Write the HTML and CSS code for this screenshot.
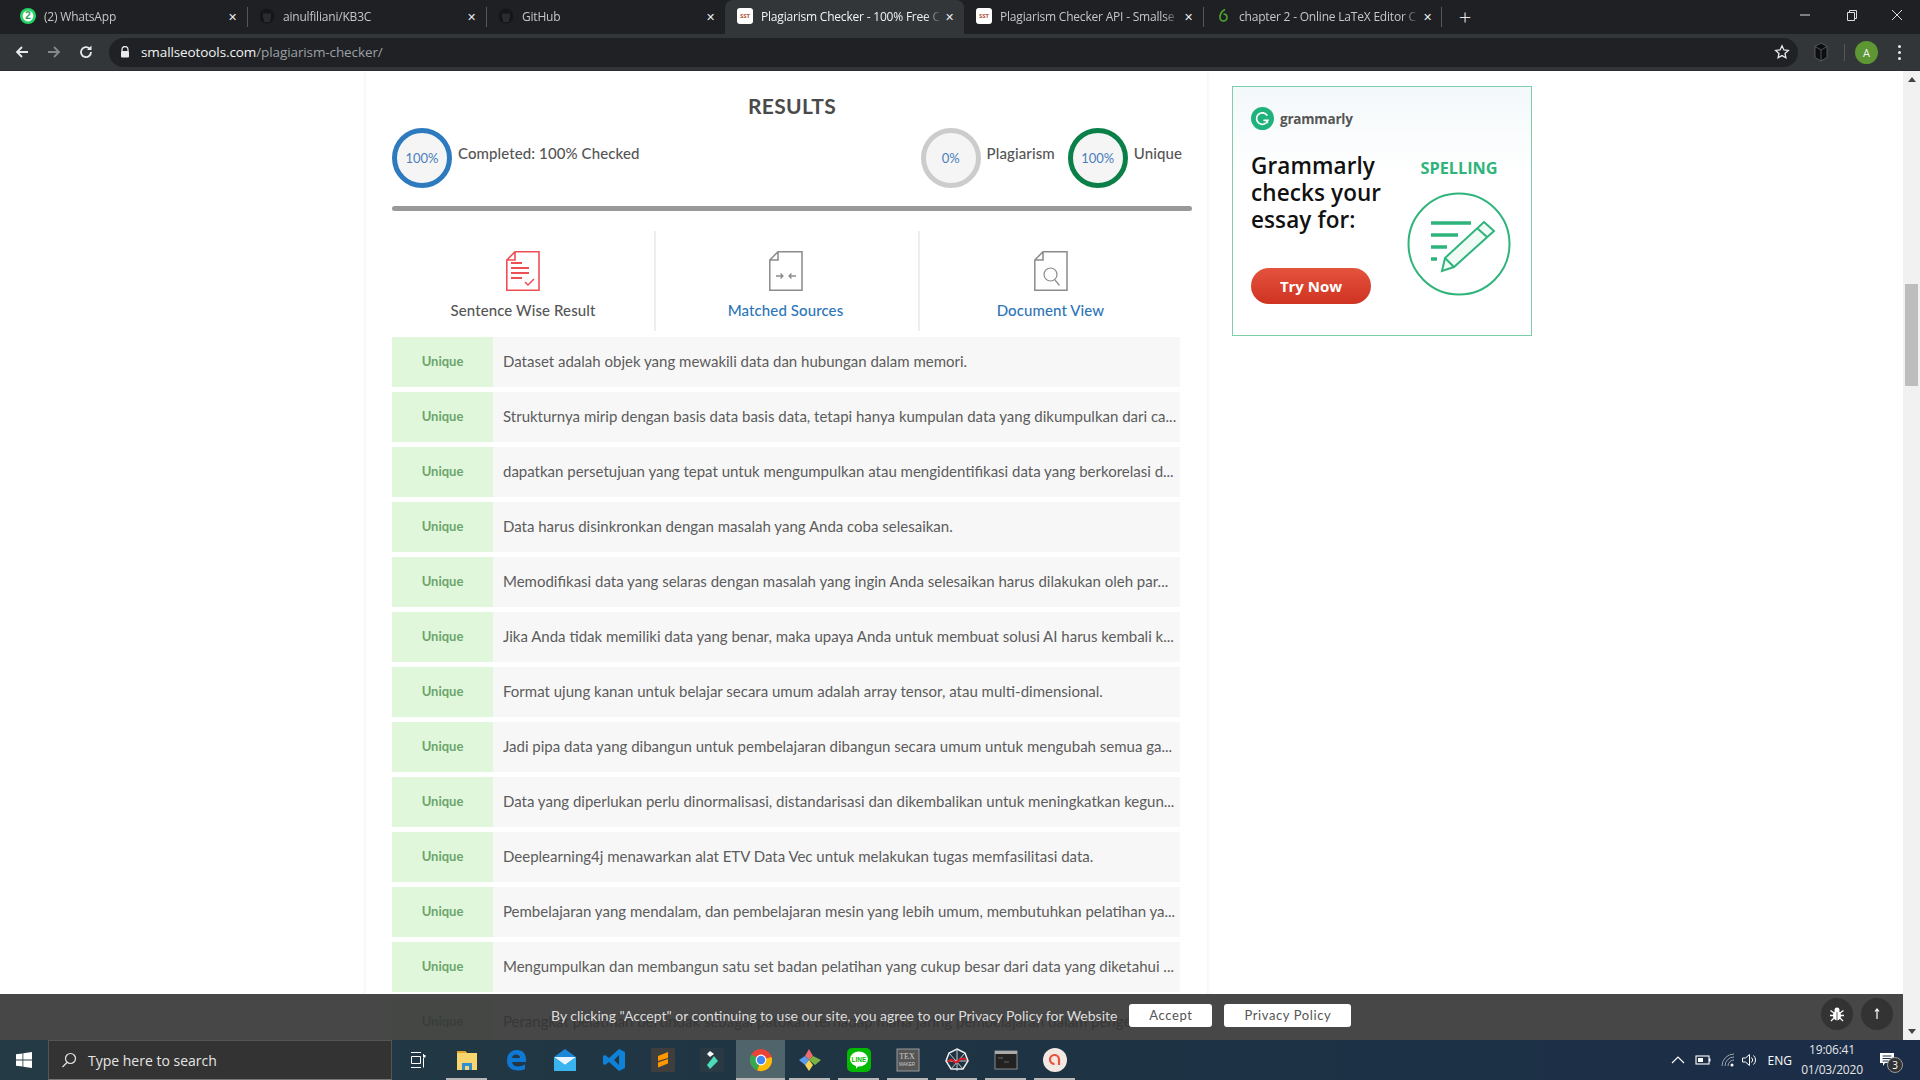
FILE: index.html
```html
<!DOCTYPE html>
<html lang="en">
<head>
  <meta charset="UTF-8" />
  <title>Plagiarism Checker - 100% Free Online Plagiarism Detector</title>
  <link rel="stylesheet" href="styles.css">
</head>
<body>

  <!-- browser chrome -->
  <div class="tabstrip">
    <div class="tab">
      <svg class="favicon" viewBox="0 0 16 16"><circle cx="8" cy="8" r="8" fill="#25d366"/><circle cx="8" cy="8" r="5.4" fill="#fff"/><text x="8" y="11.4" font-size="10" font-weight="700" text-anchor="middle" fill="#25a050" font-family="Liberation Sans">2</text></svg>
      <span class="tab-title">(2) WhatsApp</span><span class="tab-x">✕</span>
    </div>
    <div class="tab sep">
      <svg class="favicon" viewBox="0 0 16 16"><circle cx="8" cy="8" r="7.5" fill="#14161a"/><path d="M5 14v-3C4 10 3.6 8.6 4.2 7.4L4 5l2 .8c1.300-.4 2.700-.4 4 0L12 5l-.2 2.400c.6 1.200.2 2.600-.8 3.600v3z" fill="#2a2c30"/></svg>
      <span class="tab-title">ainulfiliani/KB3C</span><span class="tab-x">✕</span>
    </div>
    <div class="tab sep">
      <svg class="favicon" viewBox="0 0 16 16"><circle cx="8" cy="8" r="7.5" fill="#14161a"/><path d="M5 14v-3C4 10 3.6 8.6 4.2 7.4L4 5l2 .8c1.300-.4 2.700-.4 4 0L12 5l-.2 2.400c.6 1.200.2 2.600-.8 3.600v3z" fill="#2a2c30"/></svg>
      <span class="tab-title">GitHub</span><span class="tab-x">✕</span>
    </div>
    <div class="tab active">
      <span class="sst">SST</span>
      <span class="tab-title">Plagiarism Checker - 100% Free C</span><span class="tab-x">✕</span>
    </div>
    <div class="tab">
      <span class="sst">SST</span>
      <span class="tab-title">Plagiarism Checker API - Smallse</span><span class="tab-x">✕</span>
    </div>
    <div class="tab sep rsep">
      <svg class="favicon" viewBox="0 0 16 16"><path d="M10 1.500C7 3 5 5.500 5 9.500a3.500 3.500 0 0 0 7 0c0-2-1.500-3.500-3.500-3.500" fill="none" stroke="#4fa82f" stroke-width="1.600"/></svg>
      <span class="tab-title">chapter 2 - Online LaTeX Editor C</span><span class="tab-x">✕</span>
    </div>
    <span class="newtab">+</span>
    <div class="winbtns">
      <svg viewBox="0 0 46 30"><path d="M18 15h10" stroke="#ddd"/></svg>
      <svg viewBox="0 0 46 30"><path d="M19.500 12.500h7v8h-7zM21.500 12.500v-2h7v8h-2" fill="none" stroke="#ddd"/></svg>
      <svg viewBox="0 0 46 30"><path d="M18 10l10 10M28 10L18 20" stroke="#ddd"/></svg>
    </div>
  </div>

  <div class="toolbar">
    <svg class="navicon" viewBox="0 0 16 16"><path d="M14 8H3M8 3L3 8l5 5" fill="none" stroke="#e8eaed" stroke-width="1.800"/></svg>
    <svg class="navicon" viewBox="0 0 16 16"><path d="M2 8h11M8 3l5 5-5 5" fill="none" stroke="#85888c" stroke-width="1.800"/></svg>
    <svg class="navicon" viewBox="0 0 16 16"><path d="M13 8a5 5 0 1 1-1.500-3.500" fill="none" stroke="#e8eaed" stroke-width="1.800"/><path d="M13.500 1.500v4.500H9z" fill="#e8eaed"/></svg>
    <div class="omnibox">
      <svg class="lock" viewBox="0 0 10 12"><path d="M2 5V3.500a3 3 0 0 1 6 0V5" fill="none" stroke="#e8eaed" stroke-width="1.300"/><rect x="1" y="5" width="8" height="6.500" rx="1" fill="#e8eaed"/></svg>
      <span class="url">smallseotools.com<span class="url-path">/plagiarism-checker/</span></span>
      <svg class="star" viewBox="0 0 16 16"><path d="M8 1.800l1.900 4.100 4.400.5-3.300 3 .9 4.400L8 11.600l-3.900 2.200.9-4.400-3.300-3 4.400-.5z" fill="none" stroke="#e8eaed" stroke-width="1.300"/></svg>
    </div>
    <svg class="ext" viewBox="0 0 16 20"><path d="M8 1l6 3.500v11L8 19l-6-3.500v-11z" fill="#0d0e10" stroke="#6a6d70" stroke-width=".7"/><path d="M8 8v11M2 4.500L8 8l6-3.500" fill="none" stroke="#6a6d70" stroke-width=".7"/></svg>
    <span class="toolbar-sep"></span>
    <span class="avatar">A</span>
    <span class="kebab"><i></i><i></i><i></i></span>
  </div>

  <!-- page viewport -->
  <div class="viewport">
    <div class="page">
      <div class="main-card">
        <h2 class="results-title">RESULTS</h2>

        <div class="stats">
          <div class="stat">
            <span class="ring ring-blue">100%</span>
            <span class="stat-label">Completed: 100% Checked</span>
          </div>
          <div class="stat-right">
            <div class="stat">
              <span class="ring ring-grey">0%</span>
              <span class="stat-label">Plagiarism</span>
            </div>
            <div class="stat">
              <span class="ring ring-green">100%</span>
              <span class="stat-label">Unique</span>
            </div>
          </div>
        </div>

        <div class="progress"></div>

        <div class="views">
          <div class="view">
            <svg class="doc" viewBox="0 0 34 40"><path d="M9 .8h24v38.400H.8V9zM9 .8V9H.8" fill="none" stroke="#ee4f55" stroke-width="1.600"/><path d="M5 12h11M5 17h18M5 22h18M5 27h11" stroke="#ee4f55" stroke-width="1.800"/><path d="M19 31l3 3 6-6" fill="none" stroke="#ee4f55" stroke-width="1.500"/></svg>
            <span class="view-label view-dark">Sentence Wise Result</span>
          </div>
          <div class="view view-mid">
            <svg class="doc" viewBox="0 0 34 40"><path d="M9 .8h24v38.400H.8V9zM9 .8V9H.8" fill="none" stroke="#8b8b8b" stroke-width="1.500"/><path d="M7 25h7M11.500 22.500L14 25l-2.500 2.500M27 25h-7M22.500 22.500L20 25l2.500 2.500" fill="none" stroke="#8b8b8b" stroke-width="1.300"/></svg>
            <span class="view-label">Matched Sources</span>
          </div>
          <div class="view">
            <svg class="doc" viewBox="0 0 34 40"><path d="M9 .8h24v38.400H.8V9zM9 .8V9H.8" fill="none" stroke="#8b8b8b" stroke-width="1.500"/><circle cx="16.500" cy="23.500" r="6.500" fill="none" stroke="#8b8b8b" stroke-width="1.200"/><path d="M21 29l4.500 5.500" stroke="#8b8b8b" stroke-width="1.200"/></svg>
            <span class="view-label">Document View</span>
          </div>
        </div>

        <div class="rows">
          <div class="row"><span class="badge">Unique</span><span class="sentence">Dataset adalah objek yang mewakili data dan hubungan dalam memori.</span></div>
          <div class="row"><span class="badge">Unique</span><span class="sentence">Strukturnya mirip dengan basis data basis data, tetapi hanya kumpulan data yang dikumpulkan dari ca...</span></div>
          <div class="row"><span class="badge">Unique</span><span class="sentence">dapatkan persetujuan yang tepat untuk mengumpulkan atau mengidentifikasi data yang berkorelasi d...</span></div>
          <div class="row"><span class="badge">Unique</span><span class="sentence">Data harus disinkronkan dengan masalah yang Anda coba selesaikan.</span></div>
          <div class="row"><span class="badge">Unique</span><span class="sentence">Memodifikasi data yang selaras dengan masalah yang ingin Anda selesaikan harus dilakukan oleh par...</span></div>
          <div class="row"><span class="badge">Unique</span><span class="sentence">Jika Anda tidak memiliki data yang benar, maka upaya Anda untuk membuat solusi AI harus kembali k...</span></div>
          <div class="row"><span class="badge">Unique</span><span class="sentence">Format ujung kanan untuk belajar secara umum adalah array tensor, atau multi-dimensional.</span></div>
          <div class="row"><span class="badge">Unique</span><span class="sentence">Jadi pipa data yang dibangun untuk pembelajaran dibangun secara umum untuk mengubah semua ga...</span></div>
          <div class="row"><span class="badge">Unique</span><span class="sentence">Data yang diperlukan perlu dinormalisasi, distandarisasi dan dikembalikan untuk meningkatkan kegun...</span></div>
          <div class="row"><span class="badge">Unique</span><span class="sentence">Deeplearning4j menawarkan alat ETV Data Vec untuk melakukan tugas memfasilitasi data.</span></div>
          <div class="row"><span class="badge">Unique</span><span class="sentence">Pembelajaran yang mendalam, dan pembelajaran mesin yang lebih umum, membutuhkan pelatihan ya...</span></div>
          <div class="row"><span class="badge">Unique</span><span class="sentence">Mengumpulkan dan membangun satu set badan pelatihan yang cukup besar dari data yang diketahui ...</span></div>
          <div class="row"><span class="badge">Unique</span><span class="sentence">Perangkat pelatihan bertindak sebagai patokan terhadap mana jaring pembelajaran dalam penge...</span></div>
        </div>
      </div>

      <aside class="ad">
        <div class="ad-brand">
          <svg class="ad-logo" viewBox="0 0 24 24"><circle cx="12" cy="12" r="12" fill="#20b27c"/><path d="M17 9a6 6 0 1 0 .5 5h-4.500M17 17v-3h-3" fill="none" stroke="#fff" stroke-width="1.800"/></svg>
          <span class="ad-name">grammarly</span>
        </div>
        <div class="ad-body">
          <div class="ad-left">
            <p class="ad-copy">Grammarly checks your essay for:</p>
            <span class="ad-btn">Try Now</span>
          </div>
          <div class="ad-right">
            <span class="ad-word">SPELLING</span>
            <svg class="ad-pic" viewBox="0 0 104 104"><circle cx="52" cy="52" r="50.500" fill="none" stroke="#2fb47c" stroke-width="2"/><path d="M24 31h40M24 43h27M24 55h16M24 67h6" stroke="#2fb47c" stroke-width="3.400"/><path d="M77 30l10 9-40 36-9-9zM70 36l10 9M38 66l-3 13 12-4" fill="#f0fbf6" stroke="#2fb47c" stroke-width="2"/></svg>
          </div>
        </div>
      </aside>

      <div class="scrollbar">
        <span class="arrow-up"></span>
        <span class="thumb"></span>
        <span class="arrow-down"></span>
      </div>
    </div>

    <div class="cookie">
      <span class="cookie-text">By clicking "Accept" or continuing to use our site, you agree to our Privacy Policy for Website</span>
      <span class="cookie-btn btn-accept">Accept</span>
      <span class="cookie-btn btn-policy">Privacy Policy</span>
      <span class="round-btn bug">
        <svg viewBox="0 0 16 16"><ellipse cx="8" cy="9.500" rx="4" ry="5" fill="#fff"/><circle cx="8" cy="4" r="2.500" fill="#fff"/><path d="M1.500 4.500L5 7M14.500 4.500L11 7M1 9.500h4M15 9.500h-4M2 15l3-3M14 15l-3-3" stroke="#fff" stroke-width="1.300"/><path d="M8 6v9" stroke="#333" stroke-width=".8"/></svg>
      </span>
      <span class="round-btn up">
        <svg viewBox="0 0 16 16"><path d="M8 13V3M6 5.500L8 3l2 2.500" fill="none" stroke="#fff" stroke-width="1.200"/></svg>
      </span>
    </div>
  </div>

  <!-- windows taskbar -->
  <div class="taskbar">
    <span class="start">
      <svg viewBox="0 0 16 16"><path d="M0 2.300l6.500-.9v6.200H0zM7.300 1.300L16 0v7.600H7.300zM0 8.400h6.500v6.200L0 13.700zM7.300 8.400H16V16l-8.700-1.200z" fill="#fff"/></svg>
    </span>
    <div class="search">
      <svg viewBox="0 0 16 16"><circle cx="9.500" cy="6.500" r="5" fill="none" stroke="#e6e6e6" stroke-width="1.200"/><path d="M6 10.500L1.500 15" stroke="#e6e6e6" stroke-width="1.200"/></svg>
      <span>Type here to search</span>
    </div>
    <div class="tasks">
      <span class="task task-view">
        <svg viewBox="0 0 16 16"><path d="M1 .5h10M1 15.500h10M1.500 4.500h9v7h-9zM13.500 2v1.500M13.500 6v9.500" fill="none" stroke="#fff" stroke-width="1"/><rect x="13" y="3" width="2.500" height="2.500" fill="#fff"/></svg>
      </span>
      <span class="task running">
        <svg viewBox="0 0 24 24"><path d="M2 3h8l2 2h10v17H2z" fill="#f9d56e"/><path d="M2 3h8l2 2H2z" fill="#e5a82d"/><path d="M7 22v-7h10v7h-3v-4h-4v4z" fill="#2e8fd6"/></svg>
      </span>
      <span class="task">
        <svg viewBox="0 0 24 24"><path d="M3 13C3 6 7 2 13 2c6 0 9 4 9 10v2H8c.5 3 3 4.500 6 4.500 2.500 0 5-.8 7-2v4.500c-2 1-4.500 1.500-7 1.500C7 22.500 3 19 3 13zm5-3h8c0-2-1.500-3.500-4-3.500S8.500 8 8 10z" fill="#0f78d4"/></svg>
      </span>
      <span class="task">
        <svg viewBox="0 0 24 24"><path d="M1 9L12 1l11 8v14H1z" fill="#1b87d6"/><path d="M1 9h22L12 17z" fill="#eaf6fd"/><path d="M1 9l11 8v6H1zM23 9L12 17v6h11z" fill="#39b4ee"/></svg>
      </span>
      <span class="task">
        <svg viewBox="0 0 24 24"><path d="M17 1l6 3v16l-6 3-10-9-4 3-2-1V8l2-1 4 3zM17 7l-5 5 5 5z" fill="#0f82d8"/></svg>
      </span>
      <span class="task">
        <svg viewBox="0 0 24 24"><rect width="24" height="24" fill="#3e3e3e" rx="1"/><path d="M17 4L7 8v5l10-3zM17 11L7 14.500v5l10-4z" fill="#ff9800"/></svg>
      </span>
      <span class="task">
        <svg viewBox="0 0 24 24"><rect width="24" height="24" fill="#2a3a44" rx="1"/><path d="M10 3l4 3-4 3-3-3z" fill="#fff"/><path d="M14 8l4 5-8 8-3-4z" fill="#4ddbb8"/></svg>
      </span>
      <span class="task active">
        <svg viewBox="0 0 24 24"><circle cx="12" cy="12" r="11" fill="#ea4335"/><path d="M12 12L22.500 9A11 11 0 0 1 8 22.300z" fill="#fbbc05"/><path d="M12 12L8 22.300A11 11 0 0 1 2.500 6.500z" fill="#34a853"/><circle cx="12" cy="12" r="5.400" fill="#fff"/><circle cx="12" cy="12" r="4.200" fill="#4285f4"/></svg>
      </span>
      <span class="task running">
        <svg viewBox="0 0 24 24"><path d="M11 1l4 7-4 4-4-4z" fill="#ed6c6c"/><path d="M7 8l4 4-4 5-6-5z" fill="#5b9bf0"/><path d="M15 8l8 4-6 5-6-5z" fill="#7cb342"/><path d="M7 17l4-5 4 5-4 6z" fill="#f5d45e"/></svg>
      </span>
      <span class="task running">
        <svg viewBox="0 0 24 24"><rect width="24" height="24" rx="5" fill="#00b900"/><ellipse cx="12" cy="11" rx="9" ry="7.500" fill="#fff"/><path d="M9 17l3 0-3 4z" fill="#fff"/><text x="12" y="13.500" font-size="6.500" font-weight="700" text-anchor="middle" fill="#00b900" font-family="Liberation Sans">LINE</text></svg>
      </span>
      <span class="task running">
        <svg viewBox="0 0 24 24"><rect x="1" y="1" width="22" height="22" fill="#555" stroke="#999"/><text x="11" y="11" font-size="8" text-anchor="middle" fill="#ccc" font-family="Liberation Serif">TEX</text><text x="11" y="18" font-size="4.500" text-anchor="middle" fill="#ccc" font-family="Liberation Sans">MAKER</text></svg>
      </span>
      <span class="task running">
        <svg viewBox="0 0 24 24"><path d="M12 1l8 4 3 8-5 8H6l-5-8 3-8z" fill="none" stroke="#eee" stroke-width="1.500"/><path d="M12 1v22M1 13h22M4 5l14 16M20 5L6 21" stroke="#ddd" stroke-width=".9"/><path d="M3 14c4-6 6 2 9 0s4-5 9-3" fill="none" stroke="#e01b24" stroke-width="2.200"/></svg>
      </span>
      <span class="task running">
        <svg viewBox="0 0 24 24"><rect x="1" y="3" width="22" height="18" fill="#222" stroke="#888"/><path d="M1 3h22v3H1z" fill="#aaa"/><path d="M4 10h5M10 14h5" stroke="#666"/></svg>
      </span>
      <span class="task running">
        <svg viewBox="0 0 24 24"><circle cx="12" cy="12" r="12" fill="#f3e9e4"/><path d="M16 17V11a4.500 4.500 0 1 0-4.500 5" fill="none" stroke="#e8533a" stroke-width="2.200"/></svg>
      </span>
    </div>
    <div class="tray">
      <svg class="tray-ico" viewBox="0 0 16 16"><path d="M2 11l6-6 6 6" fill="none" stroke="#fff" stroke-width="1.200"/></svg>
      <svg class="tray-ico" viewBox="0 0 16 16"><rect x="1" y="4" width="13" height="8" fill="none" stroke="#fff" stroke-width="1.100"/><rect x="3" y="6" width="5" height="4" fill="#fff"/><rect x="14" y="6.500" width="1.500" height="3" fill="#fff"/></svg>
      <svg class="tray-ico tray-wifi" viewBox="0 0 16 16"><path d="M2 14a12 12 0 0 1 12-12M5 14a9 9 0 0 1 9-9M8 14a6 6 0 0 1 6-6" fill="none" stroke="#9aa4ab" stroke-width="1"/><circle cx="12" cy="13" r="1.500" fill="#fff"/></svg>
      <svg class="tray-ico" viewBox="0 0 16 16"><path d="M1.500 6h3l4-3.500v11l-4-3.500h-3zM10.500 5.500a3.500 3.500 0 0 1 0 5M12.500 3.500a6 6 0 0 1 0 9" fill="none" stroke="#fff" stroke-width="1"/></svg>
      <span class="lang">ENG</span>
      <span class="clock"><span>19:06:41</span><span>01/03/2020</span></span>
      <span class="notif">
        <svg viewBox="0 0 16 16"><path d="M1 1h14v10H6l-2 3v-3H1z" fill="#fff"/><path d="M3.500 4h9M3.500 6.500h9M3.500 9h6" stroke="#1b2c48"/></svg>
        <span class="notif-count">3</span>
      </span>
    </div>
  </div>

</body>
</html>
```

FILE: styles.css
```css
* {
  box-sizing: border-box;
}

html, body {
  margin: 0;
  height: 100%;
}

body {
  display: flex;
  flex-direction: column;
  height: 1080px;
  overflow: hidden;
  font-family: "Lato", "Open Sans", sans-serif;
  background-color: #fff;
}

/* tab strip */
.tabstrip {
  display: flex;
  align-items: flex-end;
  height: 34px;
  padding-left: 8px;
  background-color: #1f2023;
  color: #c4c6c9;
  font-family: "Open Sans", sans-serif;
  font-size: 12px;
}

.tab {
  position: relative;
  display: flex;
  align-items: center;
  width: 239px;
  height: 34px;
  padding: 0 7px 2px 12px;
  flex-shrink: 0;
}

.tab.sep::before {
  content: "";
  position: absolute;
  left: 0;
  top: 7px;
  height: 20px;
  width: 1px;
  background-color: #55575a;
}

.tab.rsep::after {
  content: "";
  position: absolute;
  right: 0;
  top: 7px;
  height: 20px;
  width: 1px;
  background-color: #55575a;
}

.tab.active {
  background-color: #323639;
  color: #f1f3f4;
  border-radius: 8px 8px 0 0;
}

.favicon {
  width: 16px;
  height: 16px;
  flex-shrink: 0;
}

.sst {
  display: flex;
  align-items: center;
  justify-content: center;
  width: 16px;
  height: 16px;
  flex-shrink: 0;
  background-color: #fff;
  border-radius: 3px;
  color: #b0553d;
  font-size: 6px;
  font-weight: 700;
}

.tab-title {
  flex: 1;
  margin-left: 8px;
  white-space: nowrap;
  overflow: hidden;
  letter-spacing: -0.2px;
  -webkit-mask-image: linear-gradient(to left, transparent, #000 16px);
  mask-image: linear-gradient(to left, transparent, #000 16px);
}

.tab-x {
  width: 16px;
  font-size: 11px;
  text-align: center;
  color: #e8eaed;
}

.newtab {
  margin-left: 10px;
  width: 26px;
  height: 34px;
  line-height: 32px;
  text-align: center;
  font-size: 22px;
  font-weight: 300;
  color: #e8eaed;
}

.winbtns {
  display: flex;
  margin-left: auto;
  align-self: flex-start;
}

.winbtns svg {
  width: 46px;
  height: 30px;
}

/* toolbar */
.toolbar {
  display: flex;
  align-items: center;
  height: 37px;
  padding-left: 14px;
  background-color: #323639;
  border-bottom: 1px solid #2a2c2f;
}

.navicon {
  width: 16px;
  height: 16px;
  margin-right: 16px;
}

.omnibox {
  display: flex;
  align-items: center;
  width: 1689px;
  height: 29px;
  margin-left: -1px;
  padding: 0 8px 0 11px;
  background-color: #202124;
  border-radius: 15px;
}

.lock {
  width: 10px;
  height: 12px;
}

.url {
  margin-left: 11px;
  color: #f1f3f4;
  font-family: "Open Sans", sans-serif;
  font-size: 13.500px;
  letter-spacing: -0.1px;
}

.url-path {
  color: #9aa0a6;
}

.star {
  width: 16px;
  height: 16px;
  margin-left: auto;
}

.ext {
  width: 16px;
  height: 20px;
  margin-left: 15px;
}

.toolbar-sep {
  width: 1px;
  height: 17px;
  margin-left: 15px;
  background-color: #55575a;
}

.avatar {
  display: flex;
  align-items: center;
  justify-content: center;
  width: 23px;
  height: 23px;
  margin-left: 10px;
  background-color: #5d9632;
  border-radius: 50%;
  color: #f1f3f4;
  font-family: "Open Sans", sans-serif;
  font-size: 11px;
}

.kebab {
  display: flex;
  flex-direction: column;
  gap: 3px;
  margin-left: 20px;
}

.kebab i {
  width: 3px;
  height: 3px;
  background-color: #e8eaed;
  border-radius: 50%;
}

/* page */
.viewport {
  position: relative;
  flex: 1;
  overflow: hidden;
}

.page {
  display: flex;
  height: 100%;
  padding-left: 366px;
}

.main-card {
  width: 841px;
  height: 1100px;
  padding: 19px 15px 0 26px;
  box-shadow: 0 0 5px rgba(0,0,0,0.08);
  color: #555;
}

.results-title {
  margin: 0;
  text-align: center;
  font-size: 21px;
  line-height: 32px;
  font-weight: 700;
  letter-spacing: 0.3px;
  color: #4a4a4a;
}

.stats {
  display: flex;
  justify-content: space-between;
  width: 790px;
  margin-top: 6px;
}

.stat {
  display: flex;
  align-items: flex-start;
}

.stat-right {
  display: flex;
  gap: 13px;
}

.ring {
  display: flex;
  align-items: center;
  justify-content: center;
  width: 60px;
  height: 60px;
  border-radius: 50%;
  border: 5px solid #ccc;
  background-color: #f5f5f5;
  color: #4a7ebb;
  font-size: 13px;
}

.ring-blue {
  border-color: #2d7abf;
}

.ring-grey {
  border-color: #ccc;
}

.ring-green {
  border-color: #0a8048;
}

.stat-label {
  margin: 15px 0 0 6px;
  font-size: 15px;
  line-height: 20px;
  color: #555;
  font-weight: 500;
  letter-spacing: 0.1px;
}

.progress {
  height: 5px;
  margin-top: 18px;
  background-color: #999;
  border-radius: 3px;
}

.views {
  display: flex;
  height: 100px;
  margin-top: 20px;
}

.view {
  display: flex;
  flex-direction: column;
  align-items: center;
  width: 263px;
  padding-top: 20px;
  border-left: 2px solid #eee;
  font-size: 15px;
  letter-spacing: 0.1px;
}

.view:first-child {
  width: 262px;
  border-left: none;
}

.view-mid {
  width: 264px;
  padding-right: 3px;
}

.doc {
  width: 34px;
  height: 40px;
}

.view-label {
  margin-top: 10px;
  color: #2b75b8;
  font-weight: 500;
}

.view-dark {
  color: #555;
}

.rows {
  display: flex;
  flex-direction: column;
  gap: 5px;
  width: 788px;
  margin-top: 6px;
}

.row {
  display: flex;
  align-items: center;
  height: 50px;
  flex-shrink: 0;
  background-color: #f7f7f7;
}

.badge {
  display: flex;
  align-items: center;
  justify-content: center;
  width: 101px;
  height: 100%;
  padding-bottom: 2px;
  background-color: #e1f7dc;
  color: #6ba56b;
  font-size: 13px;
  font-weight: 700;
}

.sentence {
  margin-left: 10px;
  padding-bottom: 2px;
  white-space: nowrap;
  font-size: 15px;
  color: #5c5c5c;
}

/* ad */
.ad {
  width: 300px;
  height: 250px;
  margin: 15px 0 0 25px;
  padding: 20px 0 0 18px;
  border: 1px solid #7dcfa9;
  background: linear-gradient(#f3f8fa, #fff 35%);
  font-family: "Open Sans", sans-serif;
}

.ad-brand {
  display: flex;
  align-items: center;
}

.ad-logo {
  width: 23px;
  height: 23px;
}

.ad-name {
  margin-left: 6px;
  font-size: 13.500px;
  font-weight: 700;
  color: #555;
  letter-spacing: -0.2px;
}

.ad-body {
  display: flex;
  margin-top: 22px;
}

.ad-left {
  width: 156px;
}

.ad-copy {
  margin: 0;
  width: 150px;
  font-size: 22.500px;
  line-height: 27px;
  font-weight: 600;
  color: #111;
  letter-spacing: 0.1px;
}

.ad-btn {
  display: flex;
  align-items: center;
  justify-content: center;
  width: 120px;
  height: 36px;
  margin-top: 35px;
  border-radius: 18px;
  background: linear-gradient(#e4533e, #cf3321);
  color: #fff;
  font-size: 15px;
  font-weight: 700;
}

.ad-right {
  display: flex;
  flex-direction: column;
  align-items: center;
  width: 104px;
}

.ad-word {
  margin-top: 5px;
  font-size: 16.300px;
  font-weight: 700;
  color: #2fb47c;
}

.ad-pic {
  width: 104px;
  height: 104px;
  margin-top: 13px;
}

/* scrollbar */
.scrollbar {
  position: absolute;
  top: 0;
  right: 0;
  bottom: 0;
  width: 17px;
  background-color: #f1f1f1;
}

.arrow-up {
  position: absolute;
  top: 6px;
  left: 5px;
  border: 4px solid transparent;
  border-top: none;
  border-bottom: 5px solid #444;
}

.thumb {
  position: absolute;
  top: 213px;
  left: 2px;
  width: 13px;
  height: 102px;
  background-color: #bdbdbd;
}

.arrow-down {
  position: absolute;
  bottom: 6px;
  left: 5px;
  border: 4px solid transparent;
  border-bottom: none;
  border-top: 5px solid #444;
}

/* cookie bar */
.cookie {
  position: absolute;
  left: 0;
  right: 17px;
  bottom: 0;
  display: flex;
  align-items: center;
  height: 46px;
  padding: 0 0 4px 551px;
  background-color: rgba(51,51,51,0.9);
  color: #ddd;
  font-size: 14px;
}

.cookie-text {
  white-space: nowrap;
}

.cookie-btn {
  display: flex;
  align-items: center;
  justify-content: center;
  height: 23px;
  background-color: #fff;
  border-radius: 3px;
  color: #555;
  font-size: 13px;
  letter-spacing: 0.6px;
}

.btn-accept {
  width: 83px;
  margin-left: 12px;
}

.btn-policy {
  width: 127px;
  margin-left: 12px;
}

.round-btn {
  position: absolute;
  top: 4px;
  display: flex;
  align-items: center;
  justify-content: center;
  width: 32px;
  height: 32px;
  border-radius: 50%;
  background-color: #333;
}

.round-btn svg {
  width: 16px;
  height: 16px;
}

.bug {
  left: 1821px;
}

.up {
  left: 1861px;
}

/* taskbar */
.taskbar {
  display: flex;
  align-items: center;
  height: 40px;
  background: linear-gradient(to right, #243a44, #1d3344 60%, #1b2c48);
  color: #fff;
}

.start {
  display: flex;
  align-items: center;
  justify-content: center;
  width: 48px;
  height: 40px;
}

.start svg {
  width: 16px;
  height: 16px;
}

.search {
  display: flex;
  align-items: center;
  width: 344px;
  height: 40px;
  padding-left: 12px;
  background-color: #333;
  border: 1px solid #555;
  border-bottom-color: #777;
  font-family: "Open Sans", sans-serif;
  font-size: 14px;
  color: #e6e6e6;
}

.search svg {
  width: 16px;
  height: 16px;
  margin-right: 11px;
}

.tasks {
  display: flex;
  margin-left: 1px;
}

.task {
  position: relative;
  display: flex;
  align-items: center;
  justify-content: center;
  width: 49px;
  height: 40px;
}

.task svg {
  width: 24px;
  height: 24px;
}

.task-view svg {
  width: 16px;
  height: 16px;
}

.task.running::after,
.task.active::after {
  content: "";
  position: absolute;
  left: 4px;
  right: 4px;
  bottom: 0;
  height: 2px;
  background-color: #b8b8b8;
}

.task.active {
  background-color: #50646c;
}

.task.active::after {
  left: 0;
  right: 0;
}

.tray {
  display: flex;
  align-items: center;
  margin-left: auto;
  font-family: "Open Sans", sans-serif;
}

.tray-ico {
  width: 16px;
  height: 16px;
  margin-right: 9px;
}

.tray-wifi {
  margin-right: 5px;
}

.lang {
  margin-left: 2px;
  font-size: 12px;
}

.clock {
  display: flex;
  flex-direction: column;
  align-items: center;
  width: 70px;
  margin-left: 5px;
  font-size: 12px;
  line-height: 20px;
  color: #e6e6e6;
  letter-spacing: -0.2px;
}

.notif {
  position: relative;
  width: 16px;
  height: 16px;
  margin: 0 25px 0 12px;
}

.notif svg {
  display: block;
  width: 16px;
  height: 16px;
}

.notif-count {
  position: absolute;
  left: 8px;
  top: 5px;
  width: 16px;
  height: 16px;
  border: 1px solid #999;
  border-radius: 50%;
  background-color: #333;
  text-align: center;
  font-size: 10px;
  line-height: 14px;
}
```
